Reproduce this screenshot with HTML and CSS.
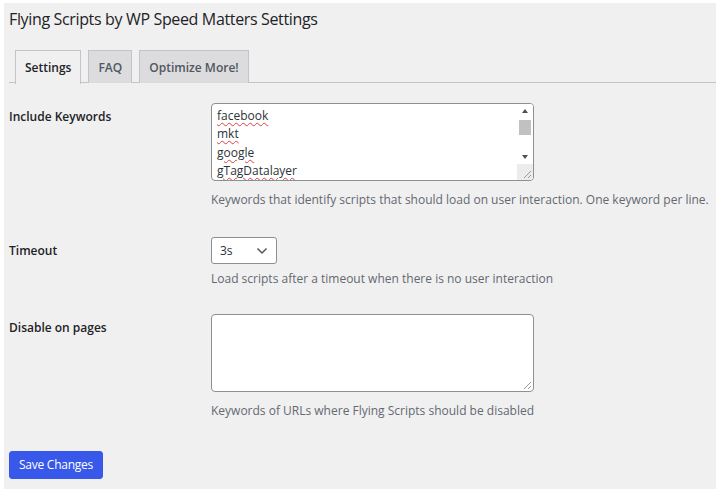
FILE: index.html
```html
<!DOCTYPE html>
<html lang="en">
<head>
<meta charset="utf-8">
<title>Flying Scripts Settings</title>
<link rel="stylesheet" href="styles.css">
</head>
<body>
<div class="page">
  <h1 class="title">Flying Scripts by WP Speed Matters Settings</h1>
  <nav class="tabs">
    <a class="tab tab-active">Settings</a>
    <a class="tab">FAQ</a>
    <a class="tab">Optimize More!</a>
  </nav>
  <form class="form">
    <div class="row row-first">
      <div class="label">Include Keywords</div>
      <div class="field">
        <div class="textarea">
          <div class="ta-content">
            <div class="ta-line"><span class="spell">facebook</span></div>
            <div class="ta-line"><span class="spell">mkt</span></div>
            <div class="ta-line"><span class="spell">google</span></div>
            <div class="ta-line"><span class="spell">gTagDatalayer</span></div>
          </div>
          <div class="scrollbar">
            <div class="sb-track">
              <svg class="sb-arrow" width="16" height="14" viewBox="0 0 16 14"><path d="M5 9h6L8 5z" fill="#505050"/></svg>
              <div class="sb-thumb-area"><div class="sb-thumb"></div></div>
              <svg class="sb-arrow" width="16" height="14" viewBox="0 0 16 14"><path d="M5 5h6L8 9z" fill="#505050"/></svg>
            </div>
            <div class="sb-corner">
              <svg width="16" height="16" viewBox="0 0 16 16"><path d="M14 7L7 14M14 11L11 14" stroke="#9a9a9a" stroke-width="1"/></svg>
            </div>
          </div>
        </div>
        <p class="desc">Keywords that identify scripts that should load on user interaction. One keyword per line.</p>
      </div>
    </div>
    <div class="row">
      <div class="label">Timeout</div>
      <div class="field">
        <div class="select">
          <span class="select-value">3s</span>
          <svg class="chevron" width="12" height="8" viewBox="0 0 12 8"><path d="M1.5 1.5L6 6l4.5-4.5" fill="none" stroke="#50575e" stroke-width="1.5"/></svg>
        </div>
        <p class="desc desc-tight">Load scripts after a timeout when there is no user interaction</p>
      </div>
    </div>
    <div class="row row-last">
      <div class="label">Disable on pages</div>
      <div class="field">
        <div class="textarea textarea-empty">
          <svg class="grip" width="12" height="12" viewBox="0 0 12 12"><path d="M11 4L4 11M11 8L8 11" stroke="#9a9a9a" stroke-width="1"/></svg>
        </div>
        <p class="desc">Keywords of URLs where Flying Scripts should be disabled</p>
      </div>
    </div>
    <div class="actions">
      <button type="button" class="btn">Save Changes</button>
    </div>
  </form>
</div>
</body>
</html>
```
FILE: styles.css
```css
* { box-sizing: border-box; }
html, body { margin: 0; padding: 0; background: #ffffff; }
body {
  font-family: "Open Sans", "Noto Sans", sans-serif;
  font-size: 12px;
  color: #1d2327;
}
.page {
  margin: 3px 0 0 4px;
  width: 712px;
  height: 486px;
  background: #f0f0f0;
  padding: 0 0 0 5px;
}
.title {
  margin: 0;
  padding-top: 5px;
  font-size: 16px;
  line-height: 23px;
  font-weight: 500;
  letter-spacing: -0.35px;
  color: #1d2327;
  height: 47px;
}
.tabs {
  display: flex;
  gap: 7px;
  padding-left: 6px;
  border-bottom: 1px solid #c3c4c7;
  height: 33px;
}
.tab {
  display: block;
  height: 33px;
  padding: 1px 9px 0;
  line-height: 32px;
  font-weight: 600;
  font-size: 12px;
  color: #50575e;
  background: #dcdcde;
  border: 1px solid #c3c4c7;
  border-bottom: none;
}
.tab-active {
  background: #f0f0f0;
  color: #1d2327;
  height: 34px;
}
.form { display: block; }
.row {
  display: grid;
  grid-template-columns: 202px 1fr;
  padding: 14px 0;
}
.row-first { padding-top: 20px; }
.row-last { padding-top: 12px; }
.label {
  padding-top: 5px;
  line-height: 18px;
  font-weight: 600;
  color: #1d2327;
}
.field { display: block; }
.textarea {
  width: 323px;
  height: 78px;
  background: #fff;
  border: 1px solid #8c8f94;
  border-radius: 4px;
  display: flex;
  overflow: hidden;
}
.ta-content {
  flex: 1;
  padding: 3px 5px;
  line-height: 18.3px;
  color: #2c3338;
}
.spell {
  text-decoration: underline wavy #e04040;
  text-decoration-thickness: 1px;
  text-underline-offset: 2px;
}
.scrollbar {
  width: 16px;
  display: flex;
  flex-direction: column;
}
.sb-track {
  flex: 1;
  display: flex;
  flex-direction: column;
  background: #ffffff;
}
.sb-arrow { display: block; flex: none; }
.sb-thumb-area { flex: 1; padding: 2px 2px; }
.sb-thumb { height: 15px; background: #c1c1c1; }
.sb-corner {
  height: 16px;
  background: #ececec;
}
.sb-corner svg { display: block; }
.textarea-empty {
  justify-content: flex-end;
  align-items: flex-end;
}
.grip { display: block; margin: 0 1px 1px 0; }
.desc {
  margin: 10px 0 0;
  line-height: 18px;
  white-space: nowrap;
  color: #646970;
}
.desc-tight { margin-top: 6px; }
.select {
  width: 66px;
  height: 27px;
  border: 1px solid #8c8f94;
  border-radius: 3px;
  background: #fff;
  display: flex;
  align-items: center;
  justify-content: space-between;
  padding: 0 8px 0 8px;
}
.select-value { color: #2c3338; }
.chevron { display: block; }
.actions { padding-top: 17px; }
.btn {
  font-family: inherit;
  font-size: 12px;
  letter-spacing: -0.25px;
  color: #fff;
  background: #3858e9;
  border: 1px solid #3858e9;
  border-radius: 3px;
  height: 28px;
  padding: 0 9px;
  line-height: 26px;
  cursor: pointer;
}
```
